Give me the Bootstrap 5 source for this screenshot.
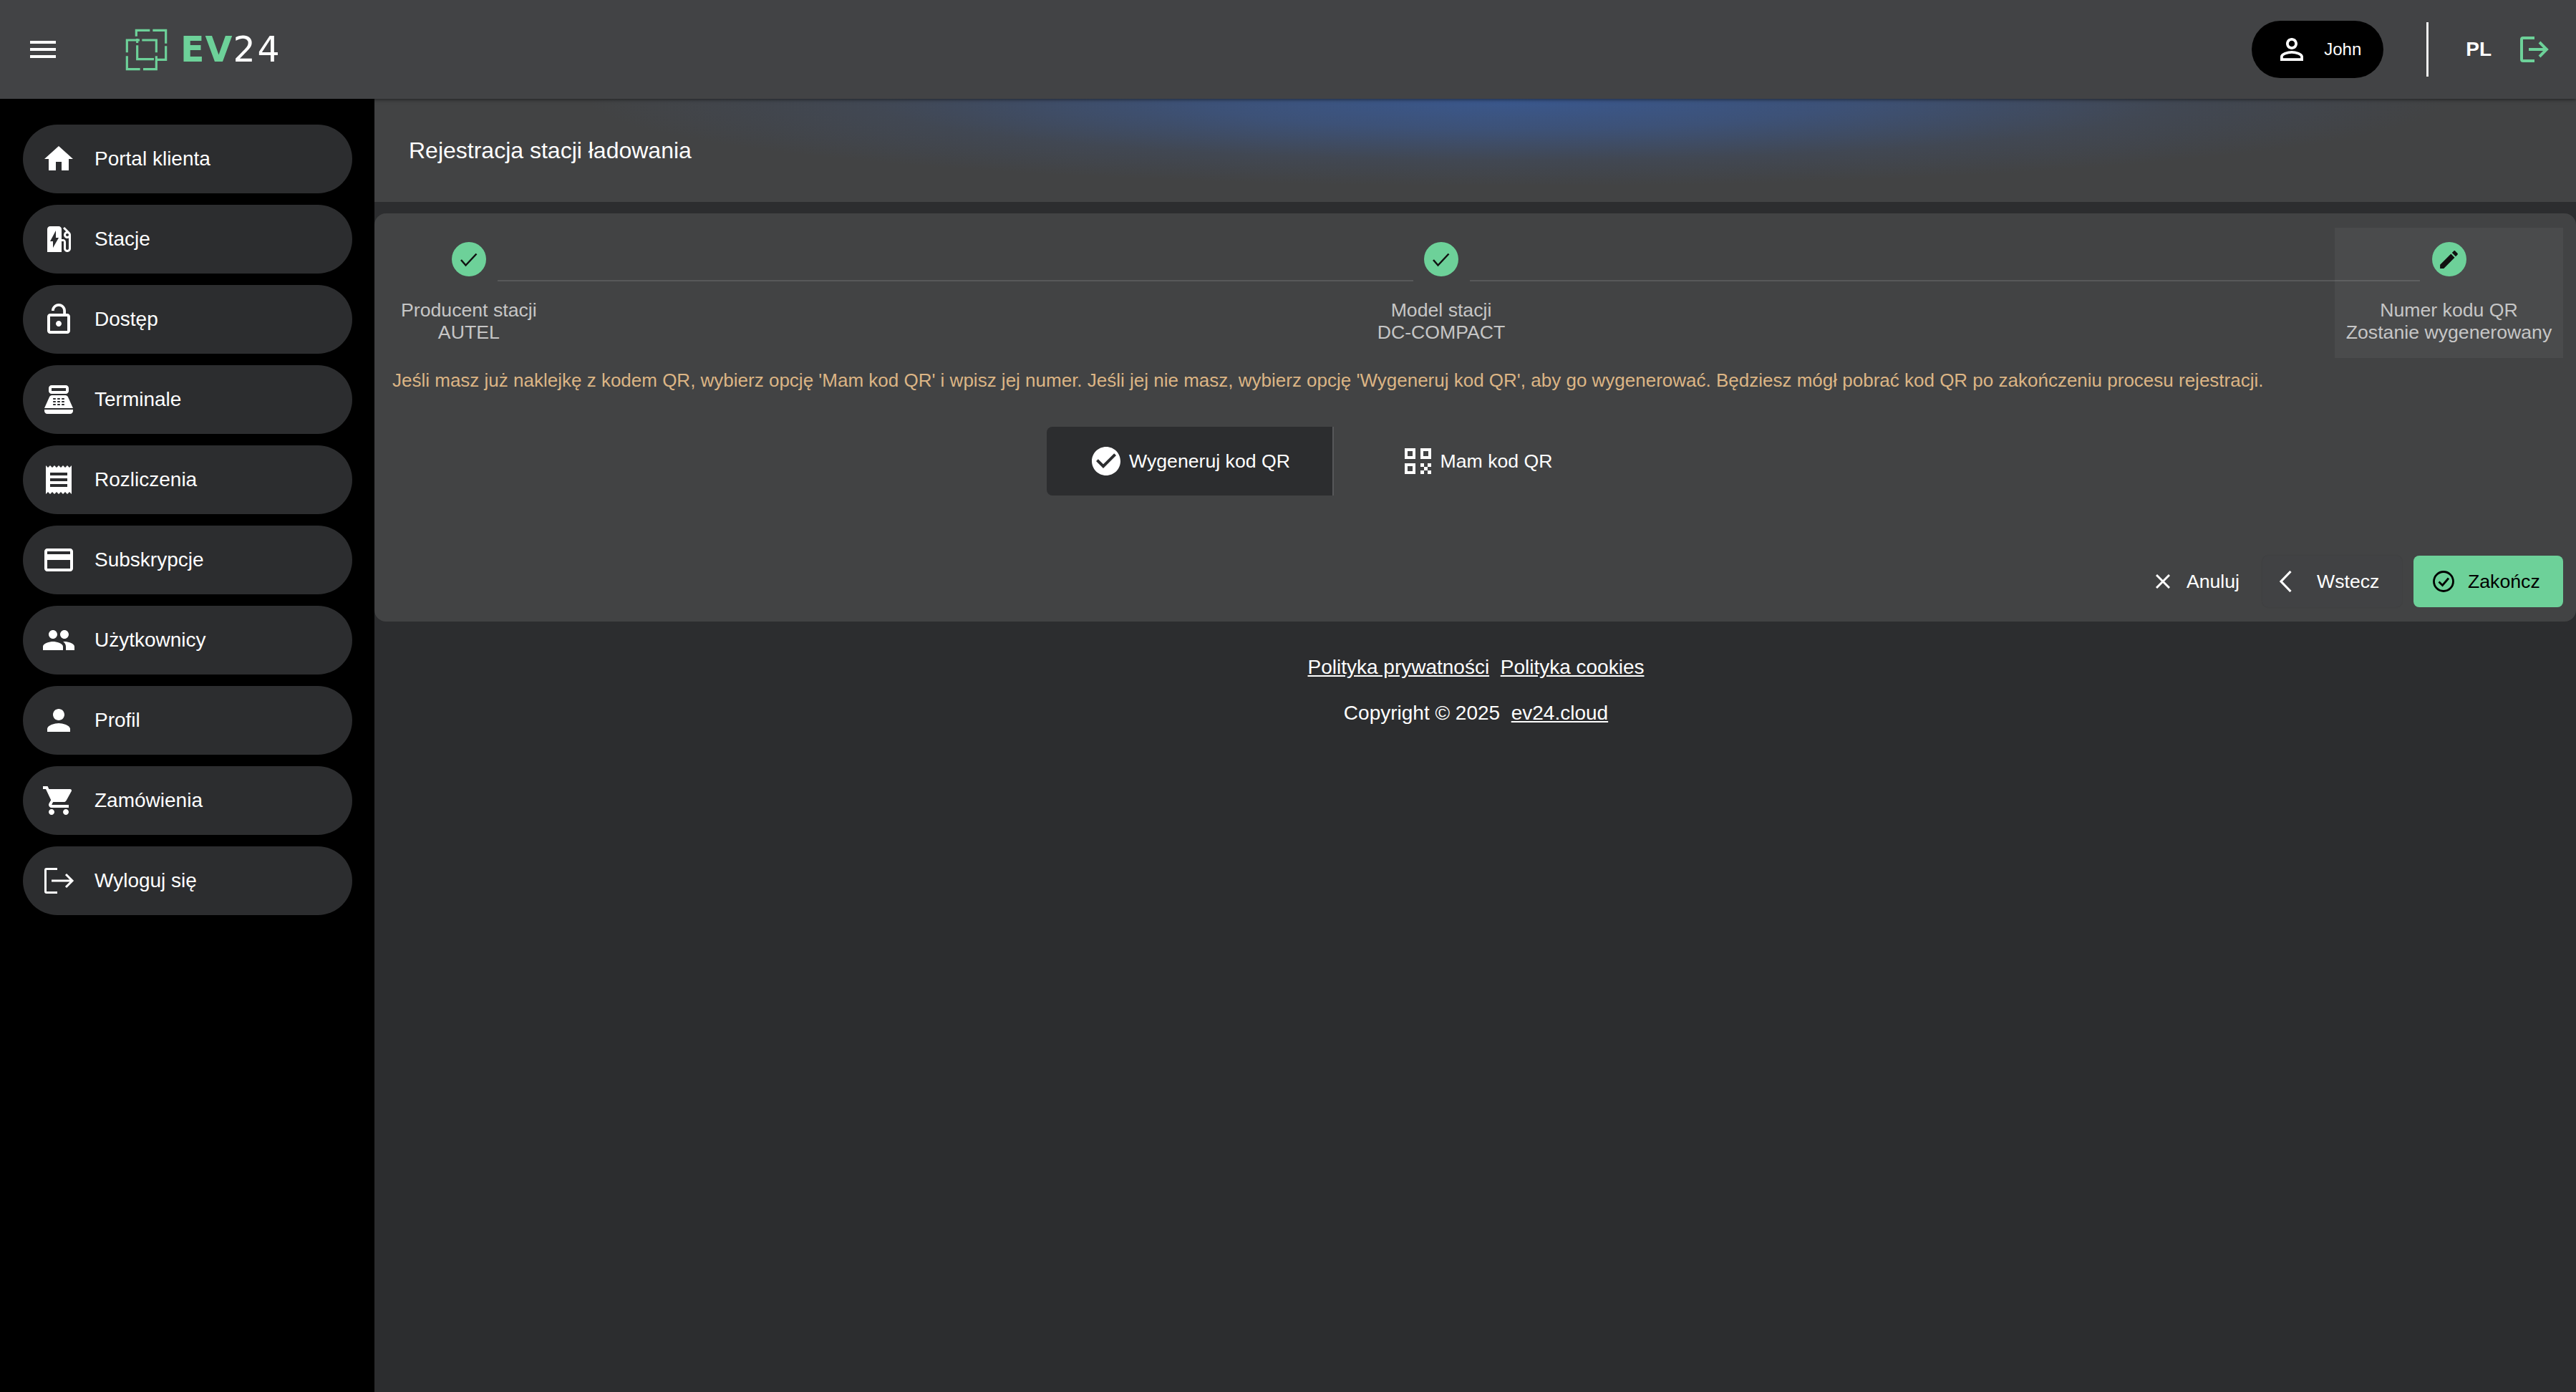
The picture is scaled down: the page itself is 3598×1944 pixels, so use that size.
<!DOCTYPE html>
<html lang="pl">
<head>
<meta charset="utf-8">
<title>EV24</title>
<link href="https://cdn.jsdelivr.net/npm/bootstrap@5.3.0/dist/css/bootstrap.min.css" rel="stylesheet">
<style>
:root{--ev-green:#6dd199;--ev-panel:#424345;--ev-dark:#2c2d2f;}
html,body{height:100%;}
body{background:var(--ev-dark);color:#fff;font-family:"Liberation Sans",Arial,sans-serif;font-size:26.67px;overflow:hidden;}
svg{display:block;flex-shrink:0;}
.ev-top{height:138px;background:var(--ev-panel);padding-left:36px;padding-right:38px;position:relative;z-index:2;box-shadow:0 1px 5px rgba(0,0,0,.55);}
.ev-logo{margin-left:91px;gap:18px;}
.ev-word{font-family:"DejaVu Sans",sans-serif;font-size:49px;line-height:1;letter-spacing:3px;color:#fff;}
.ev-word b{color:var(--ev-green);font-weight:700;letter-spacing:1px;}
.ev-user{width:184px;height:80px;background:#000;padding-left:32px;font-size:24px;gap:21px;}
.ev-vr{width:3px;height:76px;background:#f2f2f2;margin-left:60px;margin-right:52px;}
.ev-lang{font-size:28px;font-weight:700;margin-right:40px;}
.ev-body{height:calc(100vh - 138px);}
.ev-side{width:523px;background:#000;padding:36px 31px 0 32px;gap:16px;}
.ev-item{height:96px;background:var(--ev-dark);padding-left:26px;gap:26px;font-size:28px;color:#fff;}
.ev-item:hover{color:#fff;}
.ev-main{min-width:0;}
.ev-head{height:144px;background-color:#424344;background-image:radial-gradient(1300px 122px at 1597px 0,rgba(58,88,142,1) 0%,rgba(60,84,128,.85) 35%,rgba(64,76,98,.5) 70%,rgba(66,67,68,0) 100%);padding-left:48px;font-size:32px;margin-bottom:16px;}
.ev-panel{background:#424344;border-radius:16px;padding:20px 18px 20px 21px;}
.ev-step{padding:20px 16px;text-align:center;color:#c6c6c6;line-height:31px;flex-shrink:0;white-space:nowrap;}
.ev-step.ev-current{background:rgba(255,255,255,.045);width:319px;padding-left:0;padding-right:0;}
.ev-dot{width:48px;height:48px;border-radius:50%;background:var(--ev-green);margin:0 auto 32px;}
.ev-line{height:2px;background:#575859;margin-top:73px;align-self:flex-start;}
.ev-line-a{width:1279px;flex:none;margin-left:-71px;margin-right:-66px;}
.ev-line-b{flex:1 1 0;margin-left:-65px;margin-right:-119px;}
.ev-note{color:#dcb585;font-size:26px;line-height:40px;margin:11px 0 45px 4px;}
.ev-toggle{margin-left:918px;height:96px;}
.ev-opt{height:96px;width:401px;color:#fff;font-size:26.67px;border:0;border-radius:0;gap:12px;padding-left:16px;}
.ev-opt:hover{color:#fff;}
.ev-opt.ev-on{background:var(--ev-dark);border-radius:8px 0 0 8px;border-right:2px solid #57585a;}
.ev-acts{margin-top:84px;gap:16px;}
.ev-act{height:72px;font-size:26.67px;color:#fff;border:0;padding:0 32px 0 0;border-radius:8px;}
.ev-act:hover{color:#fff;}
.ev-cancel{padding-right:16px;gap:23px;}
.ev-back{background:#414244;padding-left:24px;gap:35px;width:195px;box-shadow:0 0 2px rgba(0,0,0,.12);}
.ev-finish{background:var(--ev-green);color:#000;padding-left:27px;gap:19px;width:209px;}
.ev-finish:hover{background:var(--ev-green);color:#000;}
.ev-foot{font-size:28px;line-height:42px;padding-top:43px;padding-left:2px;text-align:center;}
.ev-foot a{color:#fff;}
.ev-foot p{margin:0 0 22px;}
</style>
</head>
<body>
<header class="ev-top d-flex align-items-center">
  <svg width="48" height="48" viewBox="0 0 24 24" fill="#fff"><path d="M3 18h18v-2H3v2zm0-5h18v-2H3v2zm0-7v2h18V6H3z"/></svg>
  <div class="ev-logo d-flex align-items-center">
    <svg width="59" height="59" viewBox="30 30 177 177" fill="none" stroke="#6dd199" stroke-width="9.5"><path d="M76 62V37H133M145 37H200V92M200 103V160H160M150 158H80V100M80 90V72"/><path d="M37 130V78H90M100 78H160V130M160 145V200H105M92 200H37V145"/></svg>
    <span class="ev-word"><b>EV</b>24</span>
  </div>
  <div class="ms-auto d-flex align-items-center">
    <div class="ev-user rounded-pill d-flex align-items-center">
      <svg width="48" height="48" viewBox="0 0 24 24" fill="#fff"><path d="M12 5.9c1.16 0 2.1.94 2.1 2.1s-.94 2.1-2.1 2.1S9.9 9.16 9.9 8s.94-2.1 2.1-2.1m0 9c2.97 0 6.1 1.46 6.1 2.1v1.1H5.9V17c0-.64 3.13-2.1 6.1-2.1M12 4C9.79 4 8 5.79 8 8s1.79 4 4 4 4-1.79 4-4-1.79-4-4-4zm0 9c-2.67 0-8 1.34-8 4v3h16v-3c0-2.66-5.33-4-8-4z"/></svg>
      <span>John</span>
    </div>
    <div class="ev-vr"></div>
    <span class="ev-lang">PL</span>
    <svg width="40" height="36" viewBox="0 0 40 36" fill="none" stroke="#6dd199" stroke-width="4"><path d="M20 2H4a2 2 0 0 0-2 2v28a2 2 0 0 0 2 2h16"/><path d="M12 18H37M27 8L37 18 27 28"/></svg>
  </div>
</header>

<div class="ev-body d-flex">
  <nav class="ev-side d-flex flex-column flex-shrink-0">
    <a href="#" class="ev-item rounded-pill d-flex align-items-center text-decoration-none"><svg width="48" height="48" viewBox="0 0 24 24" fill="#fff"><path d="M10 20v-6h4v6h5v-8h3L12 3 2 12h3v8h5z"/></svg>Portal klienta</a>
    <a href="#" class="ev-item rounded-pill d-flex align-items-center text-decoration-none"><svg width="48" height="48" viewBox="0 0 24 24" fill="#fff"><path d="M19.77 7.23l.01-.01-3.72-3.72L15 4.56l2.11 2.11c-.94.36-1.61 1.26-1.61 2.33 0 1.38 1.12 2.5 2.5 2.5.36 0 .69-.08 1-.21v7.21c0 .55-.45 1-1 1s-1-.45-1-1V14c0-1.1-.9-2-2-2h-1V5c0-1.1-.9-2-2-2H6c-1.1 0-2 .9-2 2v16h10v-7.5h1.5v5c0 1.38 1.12 2.5 2.5 2.5s2.5-1.12 2.5-2.5V9c0-.69-.28-1.32-.73-1.77zM18 10c-.55 0-1-.45-1-1s.45-1 1-1 1 .45 1 1-.45 1-1 1zM8 18v-4.5H6L10 6v5h2l-4 7z"/></svg>Stacje</a>
    <a href="#" class="ev-item rounded-pill d-flex align-items-center text-decoration-none"><svg width="48" height="48" viewBox="0 0 24 24" fill="#fff"><path d="M12 17c1.1 0 2-.9 2-2s-.9-2-2-2-2 .9-2 2 .9 2 2 2zm6-9h-1V6c0-2.76-2.24-5-5-5S7 3.24 7 6h1.9c0-1.71 1.39-3.1 3.1-3.1 1.71 0 3.1 1.39 3.1 3.1v2H6c-1.1 0-2 .9-2 2v10c0 1.1.9 2 2 2h12c1.1 0 2-.9 2-2V10c0-1.1-.9-2-2-2zm0 12H6V10h12v10z"/></svg>Dostęp</a>
    <a href="#" class="ev-item rounded-pill d-flex align-items-center text-decoration-none"><svg width="48" height="48" viewBox="0 0 24 24" fill="#fff"><path d="M17 2H7c-1.1 0-2 .9-2 2v2c0 1.1.9 2 2 2h10c1.1 0 2-.9 2-2V4c0-1.1-.9-2-2-2zm0 4H7V4h10v2zm3 16H4c-1.1 0-2-.9-2-2v-1h20v1c0 1.1-.9 2-2 2zm-1.47-11.81C18.21 9.47 17.49 9 16.7 9H7.3c-.79 0-1.51.47-1.83 1.19L2 18h20l-3.47-7.81zM9.5 16h-1c-.28 0-.5-.22-.5-.5s.22-.5.5-.5h1c.28 0 .5.22.5.5s-.22.5-.5.5zm0-2h-1c-.28 0-.5-.22-.5-.5s.22-.5.5-.5h1c.28 0 .5.22.5.5s-.22.5-.5.5zm0-2h-1c-.28 0-.5-.22-.5-.5s.22-.5.5-.5h1c.28 0 .5.22.5.5s-.22.5-.5.5zm3 4h-1c-.28 0-.5-.22-.5-.5s.22-.5.5-.5h1c.28 0 .5.22.5.5s-.22.5-.5.5zm0-2h-1c-.28 0-.5-.22-.5-.5s.22-.5.5-.5h1c.28 0 .5.22.5.5s-.22.5-.5.5zm0-2h-1c-.28 0-.5-.22-.5-.5s.22-.5.5-.5h1c.28 0 .5.22.5.5s-.22.5-.5.5zm3 4h-1c-.28 0-.5-.22-.5-.5s.22-.5.5-.5h1c.28 0 .5.22.5.5s-.22.5-.5.5zm0-2h-1c-.28 0-.5-.22-.5-.5s.22-.5.5-.5h1c.28 0 .5.22.5.5s-.22.5-.5.5zm0-2h-1c-.28 0-.5-.22-.5-.5s.22-.5.5-.5h1c.28 0 .5.22.5.5s-.22.5-.5.5z"/></svg>Terminale</a>
    <a href="#" class="ev-item rounded-pill d-flex align-items-center text-decoration-none"><svg width="48" height="48" viewBox="0 0 24 24" fill="#fff"><path d="M18 17H6v-2h12v2zm0-4H6v-2h12v2zm0-4H6V7h12v2zM3 22l1.5-1.5L6 22l1.5-1.5L9 22l1.5-1.5L12 22l1.5-1.5L15 22l1.5-1.5L18 22l1.5-1.5L21 22V2l-1.5 1.5L18 2l-1.5 1.5L15 2l-1.5 1.5L12 2l-1.5 1.5L9 2 7.5 3.5 6 2 4.5 3.5 3 2v20z"/></svg>Rozliczenia</a>
    <a href="#" class="ev-item rounded-pill d-flex align-items-center text-decoration-none"><svg width="48" height="48" viewBox="0 0 24 24" fill="#fff"><path d="M20 4H4c-1.11 0-1.99.89-1.99 2L2 18c0 1.11.89 2 2 2h16c1.11 0 2-.89 2-2V6c0-1.11-.89-2-2-2zm0 14H4v-6h16v6zm0-10H4V6h16v2z"/></svg>Subskrypcje</a>
    <a href="#" class="ev-item rounded-pill d-flex align-items-center text-decoration-none"><svg width="48" height="48" viewBox="0 0 24 24" fill="#fff"><path d="M16 11c1.66 0 2.99-1.34 2.99-3S17.66 5 16 5c-1.66 0-3 1.34-3 3s1.34 3 3 3zm-8 0c1.66 0 2.99-1.34 2.99-3S9.66 5 8 5C6.34 5 5 6.34 5 8s1.34 3 3 3zm0 2c-2.33 0-7 1.17-7 3.5V19h14v-2.5c0-2.33-4.67-3.5-7-3.5zm8 0c-.29 0-.62.02-.97.05 1.16.84 1.97 1.97 1.97 3.45V19h6v-2.5c0-2.33-4.67-3.5-7-3.5z"/></svg>Użytkownicy</a>
    <a href="#" class="ev-item rounded-pill d-flex align-items-center text-decoration-none"><svg width="48" height="48" viewBox="0 0 24 24" fill="#fff"><path d="M12 12c2.21 0 4-1.79 4-4s-1.79-4-4-4-4 1.79-4 4 1.79 4 4 4zm0 2c-2.67 0-8 1.34-8 4v2h16v-2c0-2.66-5.33-4-8-4z"/></svg>Profil</a>
    <a href="#" class="ev-item rounded-pill d-flex align-items-center text-decoration-none"><svg width="48" height="48" viewBox="0 0 24 24" fill="#fff"><path d="M7 18c-1.1 0-1.99.9-1.99 2S5.9 22 7 22s2-.9 2-2-.9-2-2-2zM1 2v2h2l3.6 7.59-1.35 2.45c-.16.28-.25.61-.25.96 0 1.1.9 2 2 2h12v-2H7.42c-.14 0-.25-.11-.25-.25l.03-.12.9-1.63h7.45c.75 0 1.41-.41 1.75-1.03l3.58-6.49c.08-.14.12-.31.12-.48 0-.55-.45-1-1-1H5.21l-.94-2H1zm16 16c-1.1 0-1.99.9-1.99 2s.89 2 1.99 2 2-.9 2-2-.9-2-2-2z"/></svg>Zamówienia</a>
    <a href="#" class="ev-item rounded-pill d-flex align-items-center text-decoration-none"><svg width="48" height="48" viewBox="0 0 48 48" fill="none" stroke="#fff" stroke-width="3"><path d="M22 7.5H7a1.5 1.5 0 0 0-1.500 1.500v30a1.500 1.500 0 0 0 1.500 1.500h15"/><path d="M14 24H43M34 15L43 24 34 33"/></svg>Wyloguj się</a>
  </nav>

  <main class="ev-main flex-grow-1">
    <div class="ev-head d-flex align-items-center">Rejestracja stacji ładowania</div>
    <section class="ev-panel">
      <div class="d-flex">
        <div class="ev-step">
          <div class="ev-dot d-flex align-items-center justify-content-center"><svg width="48" height="48" viewBox="0 0 48 48" fill="none" stroke="#111" stroke-width="2.500"><path d="M13 25L19.500 32.500 34.500 16.500"/></svg></div>
          Producent stacji<br>AUTEL
        </div>
        <div class="ev-line ev-line-a"></div>
        <div class="ev-step">
          <div class="ev-dot d-flex align-items-center justify-content-center"><svg width="48" height="48" viewBox="0 0 48 48" fill="none" stroke="#111" stroke-width="2.500"><path d="M13 25L19.500 32.500 34.500 16.500"/></svg></div>
          Model stacji<br>DC-COMPACT
        </div>
        <div class="ev-line ev-line-b"></div>
        <div class="ev-step ev-current">
          <div class="ev-dot d-flex align-items-center justify-content-center"><svg width="33" height="33" viewBox="0 0 24 24" fill="#111"><path d="M3 17.250V21h3.750L17.810 9.940l-3.750-3.750L3 17.250zM20.710 7.040c.39-.39.39-1.020 0-1.410l-2.340-2.340c-.39-.39-1.020-.39-1.410 0l-1.830 1.830 3.750 3.750 1.830-1.830z"/></svg></div>
          Numer kodu QR<br>Zostanie wygenerowany
        </div>
      </div>
      <p class="ev-note">Jeśli masz już naklejkę z kodem QR, wybierz opcję 'Mam kod QR' i wpisz jej numer. Jeśli jej nie masz, wybierz opcję 'Wygeneruj kod QR', aby go wygenerować. Będziesz mógł pobrać kod QR po zakończeniu procesu rejestracji.</p>
      <div class="ev-toggle d-flex">
        <button type="button" class="btn ev-opt ev-on d-flex align-items-center justify-content-center">
          <svg width="40" height="40" viewBox="2 2 20 20" fill="#fff"><path d="M12 2C6.480 2 2 6.480 2 12s4.480 10 10 10 10-4.480 10-10S17.520 2 12 2zm-2 15l-5-5 1.410-1.410L10 14.170l7.590-7.590L19 8l-9 9z"/></svg>
          Wygeneruj kod QR
        </button>
        <button type="button" class="btn ev-opt d-flex align-items-center justify-content-center">
          <svg width="37" height="36" viewBox="0 0 37 36" fill="#fff"><g fill="none" stroke="#fff" stroke-width="4"><rect x="2" y="2" width="11" height="11"/><rect x="24" y="2" width="11" height="11"/><rect x="2" y="23" width="11" height="11"/></g><rect x="22" y="21" width="5" height="5"/><rect x="32" y="21" width="5" height="5"/><rect x="27" y="26" width="5" height="5"/><rect x="22" y="31" width="5" height="5"/><rect x="32" y="31" width="5" height="5"/></svg>
          Mam kod QR
        </button>
      </div>
      <div class="ev-acts d-flex justify-content-end">
        <button type="button" class="btn ev-act ev-cancel d-flex align-items-center"><svg width="20" height="20" viewBox="0 0 20 20" fill="none" stroke="#fff" stroke-width="3"><path d="M1 1L19 19M19 1L1 19"/></svg>Anuluj</button>
        <button type="button" class="btn ev-act ev-back d-flex align-items-center"><svg width="17" height="30" viewBox="0 0 17 30" fill="none" stroke="#fff" stroke-width="3.200"><path d="M15.500 1L2 15 15.500 29"/></svg>Wstecz</button>
        <button type="button" class="btn ev-act ev-finish d-flex align-items-center"><svg width="30" height="30" viewBox="0 0 30 30" fill="none" stroke="#000" stroke-width="2.800"><circle cx="15" cy="15" r="13.500"/><path d="M8.500 15.500L13.500 20.500 22 10.500"/></svg>Zakończ</button>
      </div>
    </section>
    <footer class="ev-foot">
      <p><a href="#">Polityka prywatności</a>&nbsp;&nbsp;<a href="#">Polityka cookies</a></p>
      <p>Copyright © 2025&nbsp;&nbsp;<a href="#">ev24.cloud</a></p>
    </footer>
  </main>
</div>
</body>
</html>
